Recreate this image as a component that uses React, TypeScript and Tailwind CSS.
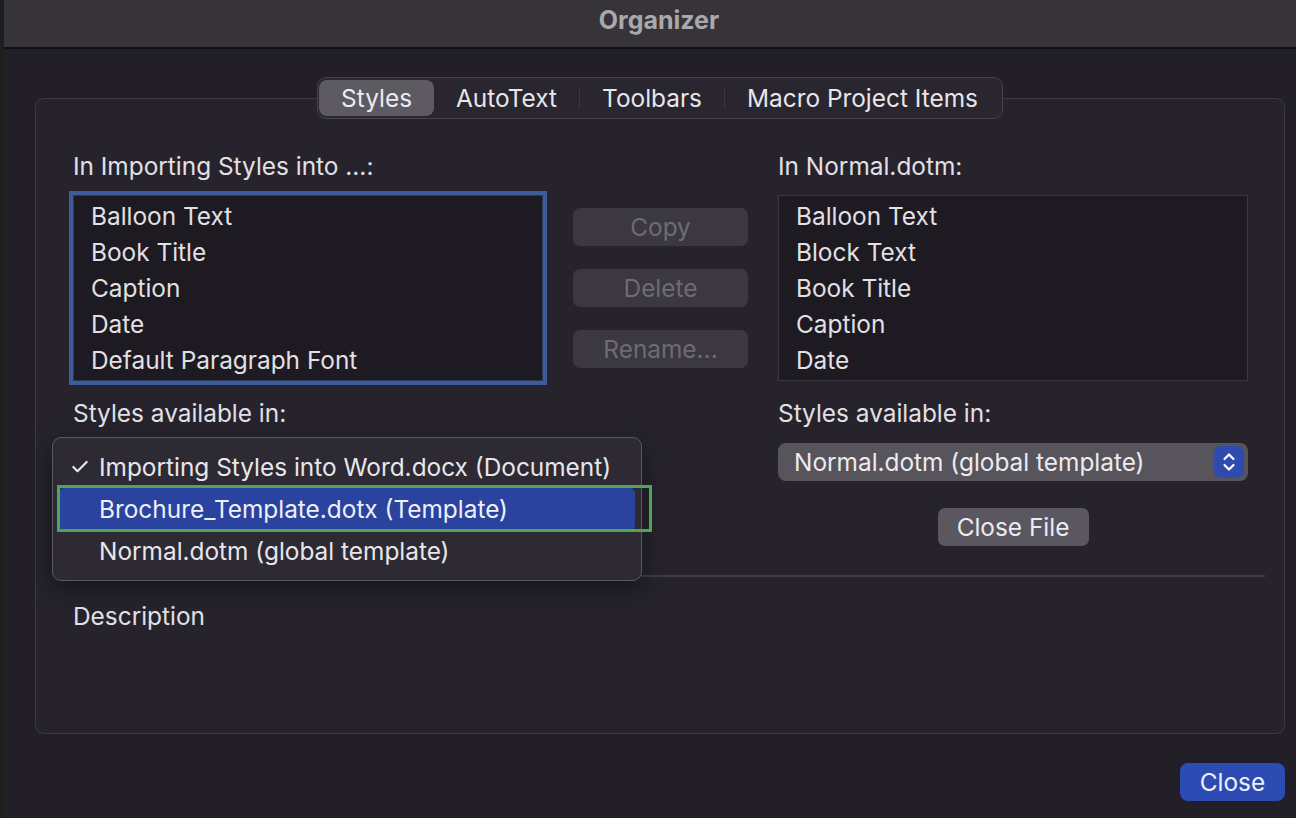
import { Check } from 'lucide-react';

const leftItems = ['Balloon Text', 'Book Title', 'Caption', 'Date', 'Default Paragraph Font'];
const rightItems = ['Balloon Text', 'Block Text', 'Book Title', 'Caption', 'Date'];
const tabs = ['Styles', 'AutoText', 'Toolbars', 'Macro Project Items'];

function StyleList({ items, focused }: { items: string[]; focused?: boolean }) {
  return (
    <div
      className={`h-[186px] bg-[#1d1a22] pt-[2px] ${
        focused ? 'border border-[#2c3a5c] ring-4 ring-[#3e5c98]' : 'border border-[#3a3740]'
      }`}
    >
      {items.map((item) => (
        <div key={item} className="h-[36px] pl-[17px] leading-[36px] text-[#e2e0e5]">
          {item}
        </div>
      ))}
    </div>
  );
}

function DisabledButton({ label }: { label: string }) {
  return (
    <div className="flex h-[38px] w-[175px] items-center justify-center rounded-[7px] bg-[#3b3841] text-[#6e6b73]">
      {label}
    </div>
  );
}

export default function App() {
  return (
    <div
      className="flex h-[818px] w-[1296px] bg-[#1e1f1c] text-[24.4px]"
      style={{ fontFamily: 'Inter, "Liberation Sans", sans-serif' }}
    >
      <div className="w-[4px] shrink-0" />
      <div className="flex min-w-0 flex-1 flex-col">
        {/* Title bar */}
        <div className="flex h-[49px] shrink-0 items-center justify-center border-b-2 border-[#121113] bg-[#363439] pb-[6px] pl-[18px] text-[25px] font-bold text-[#aaa8ad]">
          Organizer
        </div>

        <div className="flex flex-1 flex-col bg-[#221f29] pl-[31px] pr-[11px] pt-[28px]">
          {/* Tabs */}
          <div className="relative z-10 flex justify-center">
            <div className="flex h-[42px] items-center rounded-[9px] border border-[#45424b] bg-[#29262f] p-[2px] pl-[1px]">
              {tabs.map((tab, i) => (
                <div key={tab} className="flex h-full items-center">
                  {i > 1 && <div className="h-[22px] w-px bg-[#3b3841]" />}
                  <div
                    className={`flex h-full items-center px-[22px] ${
                      i === 0 ? 'rounded-[8px] bg-[#5d5a62] text-[#ecebee]' : 'text-[#e8e6eb]'
                    }`}
                  >
                    {tab}
                  </div>
                </div>
              ))}
            </div>
          </div>

          {/* Group box */}
          <div className="relative -mt-[21px] flex h-[636px] flex-col rounded-[9px] border border-[#3d3a44] bg-[#26232d] pl-[37px] pr-[36px] pt-[53px]">
            <div className="flex">
              <div className="flex w-[470px] flex-col">
                <div className="h-[28px] leading-[28px] text-[#e2e0e5]">In Importing Styles into ...:</div>
                <div className="mt-[15px]">
                  <StyleList items={leftItems} focused />
                </div>
                <div className="mt-[18px] h-[28px] leading-[28px] text-[#e2e0e5]">Styles available in:</div>
              </div>

              <div className="ml-[30px] flex flex-col gap-[23px] pt-[56px]">
                <DisabledButton label="Copy" />
                <DisabledButton label="Delete" />
                <DisabledButton label="Rename..." />
              </div>

              <div className="ml-[30px] flex w-[470px] flex-col">
                <div className="h-[28px] leading-[28px] text-[#e2e0e5]">In Normal.dotm:</div>
                <div className="mt-[15px]">
                  <StyleList items={rightItems} />
                </div>
                <div className="mt-[18px] h-[28px] leading-[28px] text-[#e2e0e5]">Styles available in:</div>
                <div className="mt-[16px] flex h-[38px] items-center justify-between rounded-[8px] bg-[#57545c] pl-[16px] pr-[4px] text-[#ecebee]">
                  <span>Normal.dotm (global template)</span>
                  <div className="flex h-[32px] w-[30px] items-center justify-center rounded-[7px] bg-[#2f4bb0]">
                    <svg width="14" height="22" viewBox="0 0 14 22" fill="none" stroke="#ffffff" strokeWidth="2.2" strokeLinecap="round" strokeLinejoin="round">
                      <path d="M2.5 8 L7 3.5 L11.5 8" />
                      <path d="M2.5 14 L7 18.5 L11.5 14" />
                    </svg>
                  </div>
                </div>
                <div className="mt-[27px] flex justify-center">
                  <div className="flex h-[38px] w-[151px] items-center justify-center rounded-[7px] bg-[#5a5760] text-[#ecebee]">
                    Close File
                  </div>
                </div>
              </div>
            </div>

            <div className="-ml-[16px] mt-[29px] h-[2px] w-[1208px] bg-[#3f3c46]" />

            <div className="mt-[25px] h-[28px] leading-[28px] text-[#e2e0e5]">Description</div>

            {/* Popup menu over the left "Styles available in" control */}
            <div className="absolute left-[16px] top-[338px] w-[590px] rounded-[9px] border border-[#5a5760] bg-[#2d2a33] px-[6px] py-[8px] shadow-[0_8px_24px_rgba(0,0,0,0.45)]">
              <div className="flex h-[42px] items-center text-[#e8e6eb]">
                <Check className="ml-[11px] mr-[9px] h-[20px] w-[20px]" strokeWidth={2.6} />
                <span>Importing Styles into Word.docx (Document)</span>
              </div>
              <div className="flex h-[42px] items-center rounded-[5px] bg-[#2a439f] pl-[40px] text-[#eef0f8]">
                Brochure_Template.dotx (Template)
              </div>
              <div className="flex h-[42px] items-center pl-[40px] text-[#e8e6eb]">
                Normal.dotm (global template)
              </div>
            </div>

            {/* Highlight annotation */}
            <div className="absolute left-[21px] top-[386px] h-[47px] w-[595px] border-[3px] border-[#4fa653]" />
          </div>

          <div className="mt-[29px] flex justify-end">
            <div className="flex h-[38px] w-[105px] items-center justify-center rounded-[8px] bg-[#2d4cb3] text-[#eef0f8]">
              Close
            </div>
          </div>
        </div>
      </div>
    </div>
  );
}
